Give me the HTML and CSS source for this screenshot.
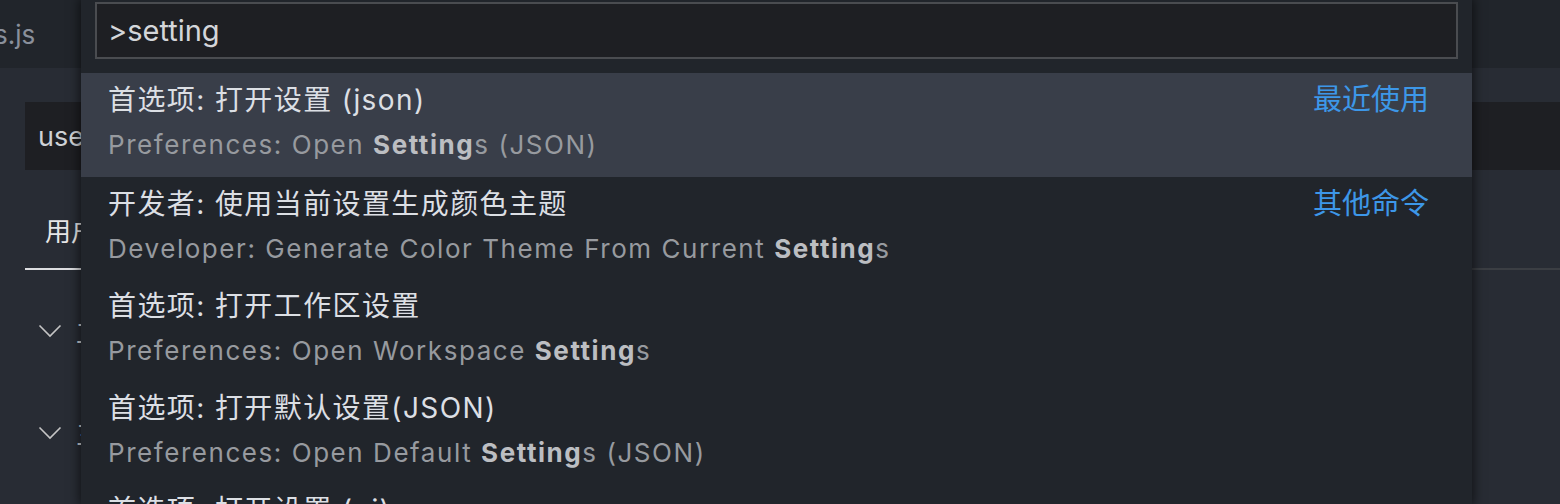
FILE: index.html
```html
<!DOCTYPE html>
<html lang="zh-CN">
<head>
<meta charset="utf-8">
<title>Command Palette</title>
<link rel="stylesheet" href="styles.css">
</head>
<body>
<div class="editor">
  <div class="tabbar"><span class="tab-name">s.js</span></div>
  <div class="settings">
    <div class="search-box"><span class="search-text">use</span></div>
    <div class="tabs"><span class="tab-user">用户</span></div>
    <div class="group first">
      <svg class="chevron" width="24" height="14" viewBox="0 0 24 14"><path d="M1.5 1.5 L12 12 L22.5 1.5" fill="none" stroke="#c5c5c5" stroke-width="1.6"/></svg>
      <span class="group-title">工</span>
    </div>
    <div class="group">
      <svg class="chevron" width="24" height="14" viewBox="0 0 24 14"><path d="M1.5 1.5 L12 12 L22.5 1.5" fill="none" stroke="#c5c5c5" stroke-width="1.6"/></svg>
      <span class="group-title">三</span>
    </div>
  </div>
</div>

<div class="quick-pick">
  <div class="qp-input-wrap">
    <div class="qp-input">&gt;setting</div>
  </div>
  <div class="qp-list">
    <div class="qp-row selected">
      <div class="qp-main">
        <div class="qp-label">首选项: 打开设置 (json)</div>
        <div class="qp-desc">Preferences: Open <b>Setting</b>s (JSON)</div>
      </div>
      <div class="qp-tag">最近使用</div>
    </div>
    <div class="qp-row">
      <div class="qp-main">
        <div class="qp-label">开发者: 使用当前设置生成颜色主题</div>
        <div class="qp-desc">Developer: Generate Color Theme From Current <b>Setting</b>s</div>
      </div>
      <div class="qp-tag">其他命令</div>
    </div>
    <div class="qp-row">
      <div class="qp-main">
        <div class="qp-label">首选项: 打开工作区设置</div>
        <div class="qp-desc">Preferences: Open Workspace <b>Setting</b>s</div>
      </div>
    </div>
    <div class="qp-row">
      <div class="qp-main">
        <div class="qp-label">首选项: 打开默认设置(JSON)</div>
        <div class="qp-desc">Preferences: Open Default <b>Setting</b>s (JSON)</div>
      </div>
    </div>
    <div class="qp-row">
      <div class="qp-main">
        <div class="qp-label">首选项: 打开设置 (ui)</div>
        <div class="qp-desc">Preferences: Open <b>Setting</b>s (UI)</div>
      </div>
    </div>
  </div>
</div>
</body>
</html>
```
FILE: styles.css
```css
html, body {
  margin: 0;
  padding: 0;
  width: 1560px;
  height: 504px;
  overflow: hidden;
  background: #282c34;
  font-family: "Inter", "Noto Sans CJK SC", sans-serif;
}

.editor {
  width: 1560px;
  height: 504px;
  display: flex;
  flex-direction: column;
}

.tabbar {
  height: 68px;
  background: #21252b;
  display: flex;
  align-items: center;
  flex-shrink: 0;
}

.tab-name {
  color: #8a909b;
  font-size: 26px;
  margin-left: -6px;
}

.settings {
  display: flex;
  flex-direction: column;
}

.search-box {
  margin-top: 34px;
  margin-left: 25px;
  height: 68px;
  background: #1e1f23;
  display: flex;
  align-items: center;
}

.search-text {
  color: #cfd2d6;
  font-size: 27px;
  margin-left: 13px;
}

.tabs {
  margin-left: 25px;
  height: 98px;
  border-bottom: 2px solid #3b3e43;
  display: flex;
  align-items: flex-end;
}

.tab-user {
  color: #e6e6e6;
  font-size: 26px;
  line-height: 40px;
  padding: 0 20px 16px 20px;
  border-bottom: 2px solid #dcdde0;
  margin-bottom: -2px;
}

.group {
  height: 102px;
  display: flex;
  align-items: center;
}

.group.first {
  margin-top: 10px;
}

.chevron {
  margin-left: 38px;
  flex-shrink: 0;
}

.group-title {
  margin-left: 14px;
  color: #cfd2d6;
  font-size: 26px;
}

.quick-pick {
  position: absolute;
  left: 81px;
  top: 0;
  width: 1391px;
  height: 504px;
  overflow: hidden;
  background: #21252b;
  box-shadow: 0 0 10px 2px rgba(0, 0, 0, 0.55);
}

.qp-input-wrap {
  padding: 2px 14px 0 14px;
}

.qp-input {
  height: 53px;
  border: 2px solid #4a4c50;
  background: #1e1f23;
  color: #d4d6da;
  font-size: 29px;
  line-height: 54px;
  padding-left: 11px;
}

.qp-list {
  margin-top: 14px;
}

.qp-row {
  height: 102px;
  box-sizing: border-box;
  padding: 6px 43px 0 27px;
  display: flex;
  align-items: flex-start;
  justify-content: space-between;
}

.qp-row.selected {
  background: #393e49;
  height: 104px;
}

.qp-main {
  display: flex;
  flex-direction: column;
}

.qp-label {
  color: #dcdfe4;
  font-size: 28px;
  line-height: 42px;
  letter-spacing: 1.4px;
  white-space: nowrap;
}

.qp-desc {
  color: #979a9f;
  font-size: 26px;
  line-height: 47px;
  letter-spacing: 1.55px;
  white-space: nowrap;
}

.qp-desc b {
  color: #bcbec2;
  font-weight: 700;
}

.qp-tag {
  color: #3d97e8;
  font-size: 29px;
  line-height: 42px;
  white-space: nowrap;
}
```
